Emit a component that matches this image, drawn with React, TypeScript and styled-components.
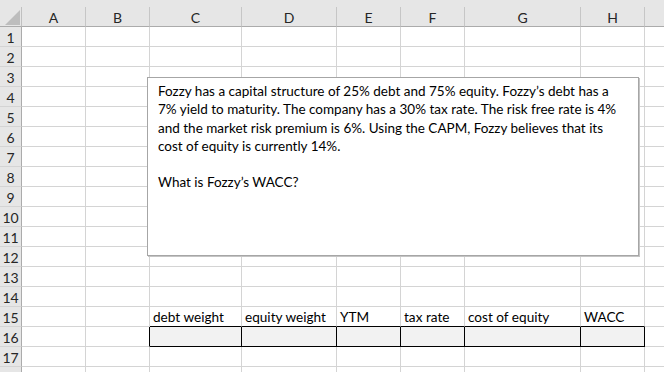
import React from "react";
import styled, { createGlobalStyle } from "styled-components";

const GlobalStyle = createGlobalStyle`
  html, body {
    margin: 0;
    padding: 0;
    background: #ffffff;
    overflow: hidden;
  }
  body {
    font-family: "Lato", "Open Sans", sans-serif;
  }
`;

const columns = ["A", "B", "C", "D", "E", "F", "G", "H", ""];
const widths = [22, 64, 64, 92, 95, 64, 64, 116, 64, 40];
const labels: Record<number, string> = {
  2: "debt weight",
  3: "equity weight",
  4: "YTM",
  5: "tax rate",
  6: "cost of equity",
  7: "WACC",
};

const Sheet = styled.div`
  position: relative;
  width: 664px;
  height: 372px;
  overflow: hidden;
  background: #fff;
`;

const TopBand = styled.div`
  height: 7px;
  background: #e6e6e6;
`;

const Grid = styled.div<{ $cols: string }>`
  display: grid;
  grid-template-columns: ${(p) => p.$cols};
  grid-auto-rows: 20px;
  font-size: 14px;
  color: #000;
`;

const Corner = styled.div`
  background: #e6e6e6;
  border-right: 1px solid #c0c0c0;
  border-bottom: 1px solid #ababab;
  display: flex;
  align-items: flex-end;
  justify-content: flex-end;
  padding: 0 1px 1px 0;
  box-sizing: border-box;
`;

const ColHead = styled.div`
  background: #e6e6e6;
  border-right: 1px solid #c6c6c6;
  border-bottom: 1px solid #ababab;
  box-sizing: border-box;
  display: flex;
  align-items: center;
  justify-content: center;
  padding-top: 1px;
  font-size: 14px;
  color: #262626;
`;

const RowHead = styled.div`
  background: #e6e6e6;
  border-right: 1px solid #ababab;
  border-bottom: 1px solid #d4d4d4;
  box-sizing: border-box;
  display: flex;
  align-items: center;
  justify-content: center;
  padding-top: 1px;
  font-size: 14px;
  color: #262626;
`;

const Cell = styled.div<{ $fill?: boolean; $boxTop?: boolean; $boxRight?: boolean; $boxBottom?: boolean }>`
  box-sizing: border-box;
  border-right: 1px solid ${(p) => (p.$boxRight ? "#000" : "#d4d4d4")};
  border-bottom: 1px solid ${(p) => (p.$boxBottom || p.$boxTop ? "#000" : "#d4d4d4")};
  background: ${(p) => (p.$fill ? "#f2f2f2" : "#fff")};
  display: flex;
  align-items: flex-end;
  padding: 0 0 0 3px;
  white-space: nowrap;
  overflow: visible;
  line-height: 18px;
  font-size: 13.6px;
`;

const TextBox = styled.div`
  position: absolute;
  left: 147px;
  top: 77px;
  width: 492px;
  height: 179px;
  box-sizing: border-box;
  background: #fff;
  border: 1px solid #a6a6a6;
  box-shadow: 1px 1px 0 #c4c4c4;
  padding: 4px 10px 0 10px;
  font-size: 13.5px;
  line-height: 18.3px;
  color: #000;
`;

const Para = styled.p`
  margin: 0 0 18.3px 0;
`;

const CornerMark = () => (
  <svg width="15" height="15" viewBox="0 0 15 15">
    <polygon points="15,0 15,15 0,15" fill="#bdbdbd" />
  </svg>
);

export default function App() {
  const rows = Array.from({ length: 18 }, (_, i) => i + 1);
  return (
    <>
      <GlobalStyle />
      <Sheet>
        <TopBand />
        <Grid $cols={widths.map((w) => `${w}px`).join(" ")}>
          <Corner>
            <CornerMark />
          </Corner>
          {columns.map((c, i) => (
            <ColHead key={i}>{c}</ColHead>
          ))}
          {rows.map((r) => (
            <React.Fragment key={r}>
              <RowHead>{r < 18 ? r : null}</RowHead>
              {widths.slice(1).map((_, ci) => {
                const inBox = ci >= 2 && ci <= 7;
                return (
                  <Cell
                    key={ci}
                    $fill={r === 16 && inBox}
                    $boxTop={r === 15 && inBox}
                    $boxBottom={r === 16 && inBox}
                    $boxRight={r === 16 && ci >= 1 && ci <= 7}
                  >
                    {r === 15 ? labels[ci] : null}
                  </Cell>
                );
              })}
            </React.Fragment>
          ))}
        </Grid>
        <TextBox>
          <Para>
            Fozzy has a capital structure of 25% debt and 75% equity. Fozzy’s debt has a 7% yield to maturity. The
            company has a 30% tax rate. The risk free rate is 4% and the market risk premium is 6%. Using the CAPM,
            Fozzy believes that its cost of equity is currently 14%.
          </Para>
          <Para>What is Fozzy’s WACC?</Para>
        </TextBox>
      </Sheet>
    </>
  );
}
